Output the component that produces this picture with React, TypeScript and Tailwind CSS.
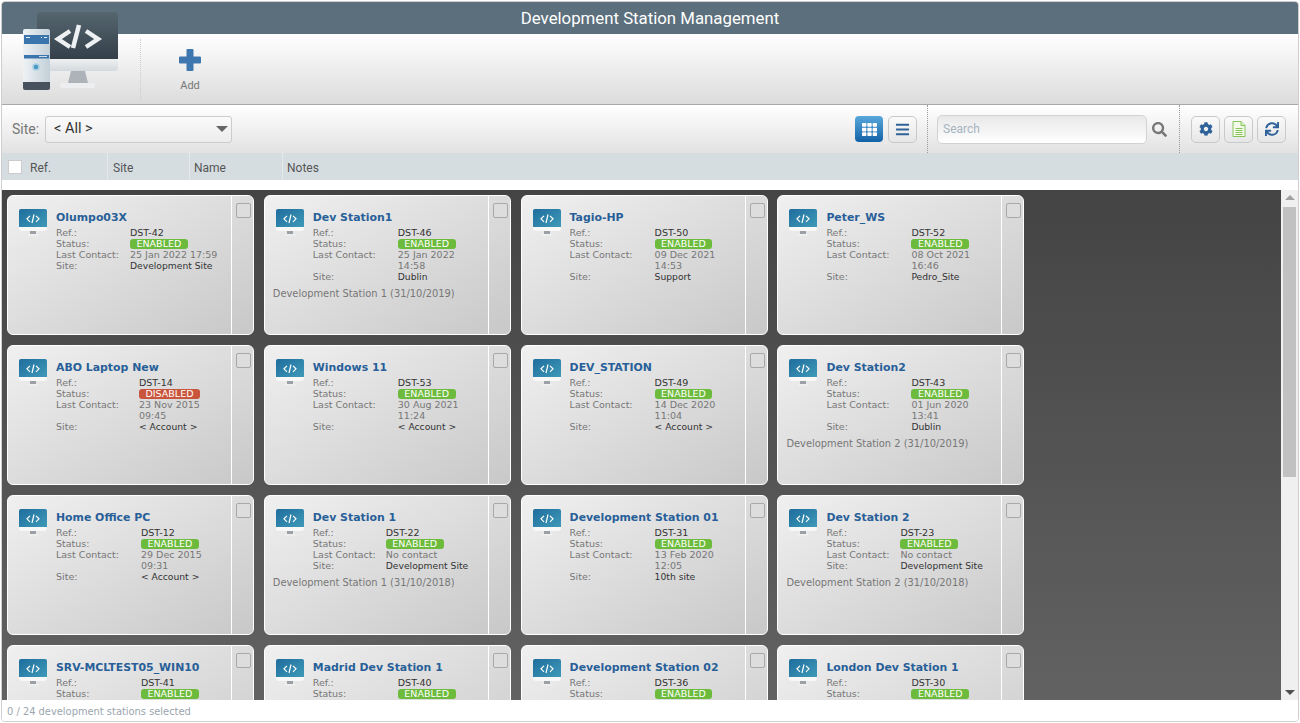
import { FaBars, FaCog, FaSearch, FaSync, FaTh } from "react-icons/fa";

interface Station {
	name: string;
	ref: string;
	disabled?: boolean;
	contact?: string;
	site?: string;
	note?: string;
	cols?: string;
}

const stations: Station[] = [
	{ name: "Olumpo03X", ref: "DST-42", contact: "25 Jan 2022 17:59", site: "Development Site", cols: "grid-cols-[74px_100px]" },
	{ name: "Dev Station1", ref: "DST-46", contact: "25 Jan 2022 14:58", site: "Dublin", note: "Development Station 1 (31/10/2019)" },
	{ name: "Tagio-HP", ref: "DST-50", contact: "09 Dec 2021 14:53", site: "Support" },
	{ name: "Peter_WS", ref: "DST-52", contact: "08 Oct 2021 16:46", site: "Pedro_Site" },
	{ name: "ABO Laptop New", ref: "DST-14", disabled: true, contact: "23 Nov 2015 09:45", site: "< Account >", cols: "grid-cols-[83px_72px]" },
	{ name: "Windows 11", ref: "DST-53", contact: "30 Aug 2021 11:24", site: "< Account >" },
	{ name: "DEV_STATION", ref: "DST-49", contact: "14 Dec 2020 11:04", site: "< Account >" },
	{ name: "Dev Station2", ref: "DST-43", contact: "01 Jun 2020 13:41", site: "Dublin", note: "Development Station 2 (31/10/2019)" },
	{ name: "Home Office PC", ref: "DST-12", contact: "29 Dec 2015 09:31", site: "< Account >" },
	{ name: "Dev Station 1", ref: "DST-22", contact: "No contact", site: "Development Site", note: "Development Station 1 (31/10/2018)", cols: "grid-cols-[73px_100px]" },
	{ name: "Development Station 01", ref: "DST-31", contact: "13 Feb 2020 12:05", site: "10th site" },
	{ name: "Dev Station 2", ref: "DST-23", contact: "No contact", site: "Development Site", note: "Development Station 2 (31/10/2018)", cols: "grid-cols-[74px_100px]" },
	{ name: "SRV-MCLTEST05_WIN10", ref: "DST-41" },
	{ name: "Madrid Dev Station 1", ref: "DST-40" },
	{ name: "Development Station 02", ref: "DST-36" },
	{ name: "London Dev Station 1", ref: "DST-30" },
];

function Logo() {
	return (
		<svg width="100" height="80" viewBox="0 0 100 80" className="absolute left-[21px] top-[11px]">
			<defs>
				<linearGradient id="scr" x1="0" y1="0" x2="0" y2="1">
					<stop offset="0" stopColor="#55666f" />
					<stop offset="1" stopColor="#343f4a" />
				</linearGradient>
				<linearGradient id="bez" x1="0" y1="0" x2="0" y2="1">
					<stop offset="0" stopColor="#eef1f3" />
					<stop offset="1" stopColor="#d4d9dd" />
				</linearGradient>
				<linearGradient id="tower" x1="0" y1="0" x2="1" y2="0">
					<stop offset="0" stopColor="#eef2f5" />
					<stop offset="1" stopColor="#c3d0d9" />
				</linearGradient>
			</defs>
			<path d="M16 4a3 3 0 0 1 3-3h75a3 3 0 0 1 3 3v44H16z" fill="url(#scr)" />
			<path d="M16 48h81v9a3 3 0 0 1-3 3H19a3 3 0 0 1-3-3z" fill="url(#bez)" />
			<path d="M50 60h14l3 12H47z" fill="#aeb3b9" />
			<rect x="39" y="72" width="35" height="5" rx="2" fill="#eceef0" />
			<path d="M49 20l-12 8 12 8M65 20l12 8-12 8M58 14l-6 23" fill="none" stroke="#eef1f3" strokeWidth="4.500" />
			<rect x="2" y="18" width="27" height="61" rx="2" fill="url(#tower)" />
			<path d="M2 71h27v6a2 2 0 0 1-2 2H4a2 2 0 0 1-2-2z" fill="#47525e" />
			<rect x="3" y="24" width="25" height="9" fill="#3a76ad" />
			<path d="M5 26.500h4M20 26.500h1M23 26.500h3" stroke="#e8eef3" />
			<rect x="3" y="44" width="25" height="3.500" fill="#3a76ad" />
			<path d="M18 45.500h8" stroke="#d0dce6" />
			<circle cx="15" cy="56" r="3" fill="#4b9ac4" stroke="#a9cfe2" strokeWidth="1.500" />
		</svg>
	);
}

function MonitorIcon() {
	return (
		<svg width="28" height="28" viewBox="0 0 28 28" className="shrink-0">
			<defs>
				<linearGradient id="mon" x1="0" y1="0" x2="1" y2="1">
					<stop offset="0" stopColor="#1f6d9e" />
					<stop offset="1" stopColor="#3f9bb8" />
				</linearGradient>
			</defs>
			<path d="M0 2a2 2 0 0 1 2-2h24a2 2 0 0 1 2 2v17H0z" fill="url(#mon)" />
			<path d="M0 18h28v1a3 3 0 0 1-3 3H3a3 3 0 0 1-3-3z" fill="#f8f8f8" />
			<rect x="11" y="22" width="6" height="3" fill="#9aa0a6" />
			<rect x="8.500" y="25" width="11" height="1.500" fill="#f0f0f0" />
			<path d="M11 12.800l-3-3 3-3M17 6.800l3 3-3 3M15 5.500l-2 8.500" fill="none" stroke="#ffffff" strokeWidth="1.200" />
		</svg>
	);
}

function DocIcon() {
	return (
		<svg width="14" height="16" viewBox="0 0 14 16">
			<path d="M1 .5h8l4 4v11H1z" fill="#f4fae9" stroke="#86c45a" />
			<path d="M9 .5v4h4" fill="#dff0c8" stroke="#86c45a" />
			<path d="M3.500 7.500h7M3.500 9.500h7M3.500 11.500h7M3.500 13.500h7" stroke="#86c45a" />
		</svg>
	);
}

function ToolButton({ children }: { children: React.ReactNode }) {
	return (
		<button className="w-[29px] h-[27px] rounded-[5px] border border-[#c6cacc] bg-gradient-to-b from-[#fafafa] to-[#e6e6e6] flex items-center justify-center text-[#2f6299]">
			{children}
		</button>
	);
}

function StationCard({ station }: { station: Station }) {
	const { name, ref, disabled, contact, site, note, cols } = station;
	return (
		<div className="flex h-[140px] rounded-[6px] border border-white bg-gradient-to-br from-[#f0f0f0] to-[#c8c8c8] overflow-hidden font-['DejaVu_Sans',sans-serif]">
			<div className="flex-1 min-w-0 border-r border-white pl-[9px] pt-[13px]">
				<div className="flex gap-[9px] pl-[2px]">
					<MonitorIcon />
					<div className="min-w-0">
						<div className="pt-[1px] text-[10.900px] leading-[16px] font-bold text-[#285f98] whitespace-nowrap">{name}</div>
						<div className={`grid ${cols ?? "grid-cols-[85px_72px]"} text-[9.500px] leading-[11px] mt-[1px]`}>
							<span className="text-[#777777]">Ref.:</span>
							<span className="text-[#333333]">{ref}</span>
							<span className="text-[#777777]">Status:</span>
							<span className={`justify-self-start h-[10px] mt-[1px] leading-[10px] px-[6.500px] rounded-[3px] text-white text-center ${disabled ? "bg-[#c9553c]" : "bg-[#6dbb3c]"}`}>
								{disabled ? "DISABLED" : "ENABLED"}
							</span>
							{contact && (
								<>
									<span className="text-[#777777]">Last Contact:</span>
									<span className="text-[#777777]">{contact}</span>
									<span className="text-[#777777]">Site:</span>
									<span className="text-[9.200px] text-[#333333] whitespace-nowrap">{site}</span>
								</>
							)}
						</div>
					</div>
				</div>
				{note && <div className="-ml-[1px] mt-[6px] text-[9.900px] leading-[12px] text-[#777777] whitespace-nowrap">{note}</div>}
			</div>
			<div className="w-[21px] shrink-0 pt-[7px] pl-[4px]">
				<div className="w-[15px] h-[15px] rounded-[2px] border border-[#a8a8a8] bg-[#dddddd]" />
			</div>
		</div>
	);
}

export default function App() {
	return (
		<div className="relative w-[1300px] h-[723px] p-[1px] bg-white overflow-hidden font-['Roboto',sans-serif]">
			<div className="h-full flex flex-col border border-[#cfcfcf] rounded-[4px] overflow-hidden">
				<div className="h-[32px] shrink-0 bg-[#5c6f7c] text-white text-[16.800px] leading-[33px] text-center">
					Development Station Management
				</div>

				<div className="h-[71px] shrink-0 flex bg-gradient-to-b from-white to-[#dcdcdc] border-b border-[#a8a8a8]">
					<div className="w-[139px] border-r border-dotted border-[#cccccc] my-[5px]" />
					<div className="w-[98px] flex flex-col items-center pt-[15px]">
						<svg width="22" height="22" viewBox="0 0 22 22">
							<path d="M7.500 1a1 1 0 0 1 1-1h5a1 1 0 0 1 1 1v6.500H21a1 1 0 0 1 1 1v5a1 1 0 0 1-1 1h-6.500V21a1 1 0 0 1-1 1h-5a1 1 0 0 1-1-1v-6.500H1a1 1 0 0 1-1-1v-5a1 1 0 0 1 1-1h6.500z" fill="#3e77b0" />
						</svg>
						<span className="mt-[8px] text-[11px] leading-[14px] text-[#777777]">Add</span>
					</div>
				</div>

				<div className="h-[48px] shrink-0 flex items-stretch bg-gradient-to-b from-white to-[#e2e2e2]">
					<div className="flex-1 flex items-center pl-[10px]">
						<span className="w-[33px] text-[14px] text-[#777777]">Site:</span>
						<div className="w-[187px] h-[27px] rounded-[3px] border border-[#cccccc] bg-gradient-to-b from-[#fafafa] to-[#ececec] flex items-center justify-between pl-[8px] pr-[3px]">
							<span className="text-[14.500px] text-[#333333]">{"< All >"}</span>
							<span className="w-0 h-0 border-x-[6px] border-x-transparent border-t-[6px] border-t-[#666666]" />
						</div>
					</div>
					<div className="flex items-center gap-[5px] pr-[10px]">
						<button className="w-[28px] h-[26px] rounded-[4px] bg-gradient-to-b from-[#58a8dc] to-[#0f62a6] flex items-center justify-center text-white">
							<FaTh className="text-[15px]" />
						</button>
						<ToolButton><FaBars className="text-[15px]" /></ToolButton>
					</div>
					<div className="w-[252px] border-l border-dotted border-[#999999] flex items-center pl-[9px]">
						<div className="w-[210px] h-[29px] rounded-[5px] border border-[#d2d2d2] bg-gradient-to-b from-[#e8e8e8] to-white pl-[5px] text-[12px] leading-[26px] text-[#a8b4c0]">
							Search
						</div>
						<FaSearch className="ml-[5px] text-[15px] text-[#777777]" />
					</div>
					<div className="w-[119px] border-l border-dotted border-[#999999] flex items-center gap-[4px] pl-[11px]">
						<ToolButton><FaCog className="text-[14px]" /></ToolButton>
						<ToolButton><DocIcon /></ToolButton>
						<ToolButton><FaSync className="text-[14px]" /></ToolButton>
					</div>
				</div>

				<div className="h-[27px] shrink-0 flex items-center bg-[#d5dde1] text-[12px] text-[#555555]">
					<div className="w-[106px] h-full flex items-center pl-[6px] border-r border-[#e4e9ec]">
						<span className="w-[14px] h-[14px] bg-white border border-[#cccccc] mr-[8px]" />
						<span className="pt-[2px]">Ref.</span>
					</div>
					<div className="w-[82px] h-full flex items-center pl-[5px] pt-[2px] border-r border-[#e4e9ec]">Site</div>
					<div className="w-[93px] h-full flex items-center pl-[4px] pt-[2px] border-r border-[#e4e9ec]">Name</div>
					<div className="pl-[4px] pt-[2px]">Notes</div>
				</div>

				<div className="h-[10px] shrink-0 bg-white" />

				<div className="flex-1 min-h-0 flex">
					<div className="flex-1 min-w-0 overflow-hidden bg-gradient-to-b from-[#444444] to-[#626262] pl-[5px] pt-[5px]">
						<div className="grid grid-cols-[repeat(4,247px)] gap-x-[9.800px] gap-y-[10px]">
							{stations.map((s) => (
								<StationCard key={s.ref} station={s} />
							))}
						</div>
					</div>
					<div className="w-[17px] shrink-0 bg-[#f0f0f0] flex flex-col items-center pt-[5px] pb-[5px]">
						<span className="w-0 h-0 border-x-[5px] border-x-transparent border-b-[5px] border-b-[#a0a0a0]" />
						<div className="w-[13px] h-[270px] mt-[7px] bg-[#c1c1c1]" />
						<div className="flex-1" />
						<span className="w-0 h-0 border-x-[5px] border-x-transparent border-t-[5px] border-t-[#505050]" />
					</div>
				</div>

				<div className="h-[21px] shrink-0 bg-white pl-[5px] font-['DejaVu_Sans',sans-serif] text-[9.900px] leading-[23px] text-[#9aa5ad]">
					0 / 24 development stations selected
				</div>
			</div>
			<Logo />
		</div>
	);
}
